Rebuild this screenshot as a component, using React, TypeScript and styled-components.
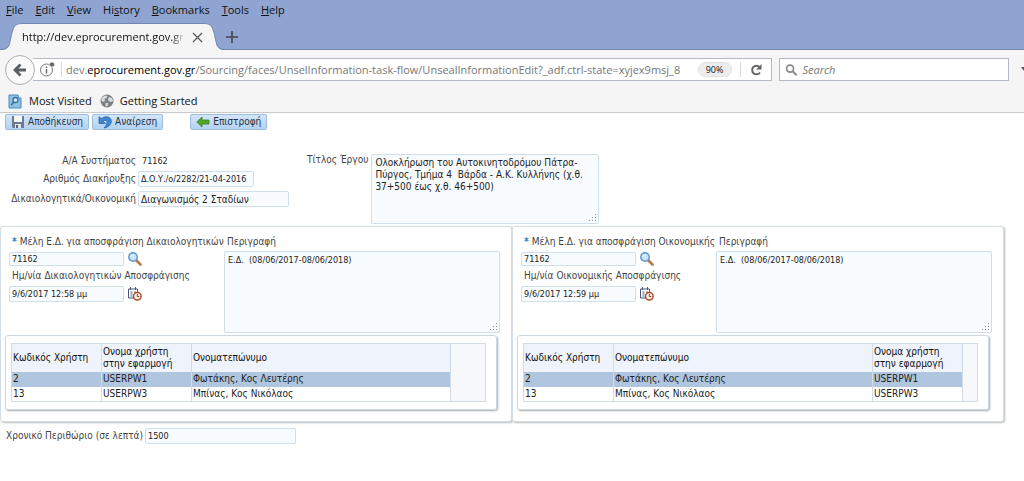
import React from 'react';
import styled, { createGlobalStyle, css } from 'styled-components';

const Global = createGlobalStyle`
  * { box-sizing: border-box; }
  body { margin: 0; background: #fff; overflow-x: hidden; }
  button, input, textarea { font: inherit; color: inherit; margin: 0; }
`;

const Page = styled.div`
  font-family: 'DejaVu Sans Condensed', 'DejaVu Sans', sans-serif;
  font-stretch: condensed;
  font-size: 10px;
  line-height: 12px;
  color: #222;
`;

/* Browser frame */
const Browser = styled.header`
  font-family: 'Open Sans', 'Noto Sans', sans-serif;
  font-stretch: normal;
  font-size: 11px;
  color: #111;
  background: #f5f5f5;
  border-bottom: 1px solid #c9cacb;
`;
const TitleArea = styled.div`
  background: #8fa4d0;
  border-bottom: 1px solid #7087b4;
`;
const MenuBar = styled.nav`
  display: flex;
  gap: 12px;
  height: 24px;
  padding: 2px 6px;
`;
const MenuItem = styled.button`
  border: 0;
  padding: 0;
  background: none;
  height: 16px;
  line-height: 16px;
`;
const TabStrip = styled.div`
  display: flex;
  align-items: flex-end;
  height: 26px;
  margin-bottom: -1px;
`;
const TabEdge = styled.svg`
  display: block;
  width: 22px;
  height: 27px;
  flex: none;
`;
const Tab = styled.div`
  display: flex;
  align-items: center;
  gap: 6px;
  width: 182px;
  height: 27px;
  background: #f5f5f5;
  border-top: 1px solid #7087b4;
`;
const TabTitle = styled.span`
  flex: 1;
  min-width: 0;
  overflow: hidden;
  white-space: nowrap;
  line-height: 16px;
  mask-image: linear-gradient(to right, #000 92%, transparent);
`;
const IconButton = styled.button`
  display: grid;
  place-items: center;
  flex: none;
  padding: 0;
  border: 0;
  background: none;
`;
const NewTab = styled(IconButton)`height: 27px;`;

const NavBar = styled.div`
  display: flex;
  align-items: center;
  height: 39px;
  padding-left: 5px;
`;
const BackButton = styled(IconButton)`
  position: relative;
  width: 30px;
  height: 30px;
  border: 1px solid #a9adb3;
  border-radius: 50%;
  background: #fafafa;
`;
const UrlBar = styled.div`
  display: flex;
  align-items: center;
  flex: 766 1 0;
  min-width: 0;
  height: 23px;
  margin-left: -2px;
  padding-left: 6px;
  border: 1px solid #b3bac4;
  border-left: 0;
  background: #fff;
`;
const Divider = styled.span<{ $gap: number }>`
  flex: none;
  width: 1px;
  height: 15px;
  margin: 0 ${p => p.$gap}px 0 6px;
  background: #d9d9d9;
`;
const Url = styled.span`
  flex: 1;
  min-width: 0;
  overflow: hidden;
  white-space: nowrap;
  line-height: 16px;
  color: #777;
  b { font-weight: 400; color: #000; }
`;
const Zoom = styled.button`
  width: 34px;
  height: 15px;
  margin-right: 2px;
  padding: 0;
  border: 1px solid #e0e0e0;
  border-radius: 8px;
  background: #ededed;
  font-size: 9px;
  line-height: 13px;
`;
const SearchBox = styled.label`
  display: flex;
  align-items: center;
  gap: 5px;
  flex: 234 1 0;
  min-width: 0;
  height: 23px;
  margin: 0 12px 0 7px;
  padding-left: 5px;
  border: 1px solid #b3bac4;
  background: #fff;
  input {
    width: 100%;
    min-width: 0;
    padding: 0;
    border: 0;
    outline: 0;
    background: none;
  }
  input::placeholder { color: #777; opacity: 1; font-style: italic; }
`;
const Bookmarks = styled.nav`
  display: flex;
  gap: 8px;
  height: 23px;
  padding: 4px 8px 0;
  a {
    display: flex;
    align-items: center;
    gap: 6px;
    height: 16px;
    color: inherit;
    text-decoration: none;
  }
`;

/* Form */
const Toolbar = styled.div`
  display: flex;
  gap: 3px;
  padding: 1px 5px 0;
`;
const Action = styled.button<{ $apart?: boolean }>`
  display: flex;
  align-items: center;
  gap: 3px;
  height: 16px;
  margin-left: ${p => (p.$apart ? 24 : 0)}px;
  padding: 0 5px;
  border: 1px solid #9dbde0;
  border-radius: 2px;
  background: linear-gradient(#d3e5f8, #b4d2f3);
  color: #234;
  white-space: nowrap;
`;
const Summary = styled.section`
  display: flex;
  align-items: flex-start;
  padding: 24px 0 2px;
`;
const SummaryFields = styled.div`
  display: grid;
  grid-template-columns: 136px auto;
  grid-template-rows: 13px 16px 16px;
  gap: 4px 2px;
  align-items: center;
  justify-items: start;
  width: 289px;
  label, span { justify-self: end; }
  output { padding-left: 4px; font-size: 9px; }
`;
const Label = styled.label`
  color: #444;
  white-space: nowrap;
`;
const Caption = styled.span`
  color: #444;
  white-space: nowrap;
`;
const field = css`
  border: 1px solid #cfdfeb;
  border-radius: 2px;
  background: #f9fcff;
  outline: 0;
`;
const Input = styled.input<{ $w: number; $h?: number; $numeric?: boolean }>`
  && { ${p => p.$numeric && 'font-size: 9px;'} }
  ${field}
  width: ${p => p.$w}px;
  height: ${p => p.$h ?? 16}px;
  padding: 0 2px;
`;
const AreaFrame = styled.div<{ $w?: number; $h: number }>`
  display: flex;
  position: relative;
  height: ${p => p.$h}px;
  ${p => (p.$w ? `width: ${p.$w}px;` : '')}
`;
const Area = styled.textarea<{ $numeric?: boolean }>`
  && { ${p => p.$numeric && 'font-size: 9px;'} }
  ${field}
  display: block;
  width: 100%;
  height: 100%;
  padding: 2px 3px;
  resize: none;
`;
const Grip = styled.svg`
  position: absolute;
  right: 2px;
  bottom: 2px;
`;
const TitleField = styled.div`
  display: flex;
  gap: 3px;
  margin-left: 18px;
`;

const Panels = styled.div`
  display: grid;
  grid-template-columns: 512fr 492fr;
  padding-right: 20px;
`;
const Panel = styled.section`
  min-width: 0;
  padding: 9px 0 11px 4px;
  border: 1px solid #d3dde7;
  border-radius: 3px;
  background: #fff;
  box-shadow: 1px 1px 2px #bbb;
`;
const PanelFields = styled.div<{ $side: number }>`
  display: grid;
  grid-template-columns: ${p => p.$side}px 1fr;
  padding-right: 11px;
`;
const SideFields = styled.div`
  display: grid;
  grid-template-rows: 12px 14px 12px 16px;
  row-gap: 4px;
  align-items: center;
  align-content: start;
  padding-left: 4px;
`;
const Indent = styled.div`padding-left: 3px; white-space: nowrap;`;
const Star = styled.span`color: #2f78b5; font-weight: 700; margin-right: 3px;`;
const Row = styled.div`
  display: flex;
  align-items: center;
  gap: 3px;
`;
const Description = styled.div`
  display: grid;
  grid-template-rows: 12px 82px;
  row-gap: 3px;
  label { padding-left: 3px; }
`;
const Box = styled.div`
  display: flex;
  margin: 2px 14px 0 0;
  padding: 7px 10px 7px 5px;
  border: 1px solid #ccd8e2;
  border-radius: 3px;
  box-shadow: 1px 1px 2px #aaa;
`;
const Table = styled.table`
  flex: 1;
  min-width: 0;
  table-layout: fixed;
  border-collapse: collapse;
  border: 1px solid #d3dce6;
  th, td {
    padding: 0 1px;
    border-right: 1px solid #d3dce6;
    text-align: left;
    font-weight: 400;
  }
  th { height: 28px; background: #eff3fb; color: #111; }
  td { height: 15px; }
`;
const DataRow = styled.tr<{ $selected: boolean }>`
  background: ${p => (p.$selected ? '#b0c5de' : '#fff')};
`;
const Filler = styled.div<{ $w: number }>`
  flex: none;
  width: ${p => p.$w}px;
  border: 1px solid #d3dce6;
  border-left: 0;
  background: #f6f8fc;
`;
const Margin = styled.div`
  display: flex;
  align-items: center;
  gap: 2px;
  padding: 6px 0 0 6px;
`;

const MENU: [string, string, string][] = [
  ['', 'F', 'ile'], ['', 'E', 'dit'], ['', 'V', 'iew'], ['Hi', 's', 'tory'],
  ['', 'B', 'ookmarks'], ['', 'T', 'ools'], ['', 'H', 'elp'],
];

const SaveIcon = () => (
  <svg width="14" height="14" viewBox="0 0 14 14">
    <path d="M1 1h12v12H2l-1-1z" fill="#6c7d92" />
    <path d="M3 1h8v6H3z" fill="#f4f7fa" />
    <path d="M4 9h6v4H4z" fill="#dfe5ec" />
    <path d="M5 10h2v3H5z" fill="#55657a" />
  </svg>
);
const UndoIcon = () => (
  <svg width="14" height="14" viewBox="0 0 14 14">
    <path d="M1 1.500v7h6.500L5.300 6.300C7 4.800 9 5.300 9 7.300c0 2-1 3.600-3 5.700 5-.8 7.300-3.500 7.300-6.700C13.300 1.300 7 .2 3.300 3.700z" fill="#3f86d4" stroke="#1e5ca5" strokeWidth=".7" />
  </svg>
);
const ReturnIcon = () => (
  <svg width="14" height="12" viewBox="0 0 14 12">
    <path d="M.8 6 6 1v3h7v4H6v3z" fill="#55a62c" stroke="#36801a" strokeWidth=".8" />
  </svg>
);
const LensIcon = () => (
  <svg width="16" height="14" viewBox="0 0 16 14">
    <path d="m9 8 4.500 4.500" stroke="#b97845" strokeWidth="2.600" strokeLinecap="round" />
    <circle cx="6" cy="5" r="4.200" fill="#c9e5fa" stroke="#5c91cb" strokeWidth="1.400" />
    <path d="M3.800 4.500C4.200 3 5.200 2.600 6.500 2.700" fill="none" stroke="#fff" />
  </svg>
);
const DateIcon = () => (
  <svg width="15" height="14" viewBox="0 0 15 14">
    <path d="M1.500 2h9v9h-9z" fill="#fff" stroke="#49557f" />
    <path d="M3.500 0v3M8.500 0v3M3.500 5h2M7 5h2M3.500 7h2M3.500 9h2" stroke="#49557f" />
    <circle cx="10.300" cy="9.300" r="3.800" fill="#fff2e8" stroke="#b2512f" strokeWidth="1.500" />
    <path d="M10.300 7v2.500h2" fill="none" stroke="#8c3d22" />
  </svg>
);
const MostVisitedIcon = () => (
  <svg width="15" height="15" viewBox="0 0 15 15">
    <path d="M1 1h9l1 3h2v10H1z" fill="#8ec0e4" stroke="#4a8cba" />
    <circle cx="7.500" cy="6" r="2.500" fill="#d8edf9" stroke="#326d9c" strokeWidth="1.300" />
    <path d="m5.700 8-2.500 3" stroke="#326d9c" strokeWidth="1.600" />
  </svg>
);
const GlobeIcon = () => (
  <svg width="14" height="14" viewBox="0 0 14 14">
    <circle cx="7" cy="7" r="6.500" fill="#7c7f82" />
    <path d="M2 3.500 5 1.500l2.500.6-1 2L4.500 5 5 7 3 8 1 6zM9 3l3 1 1 3-2 1-2.500-1L8 5zM5.500 8.500l3 1L7.500 12l-2 .5z" fill="#d9dadb" />
  </svg>
);

const GripDots = () => (
  <Grip width="9" height="9" viewBox="0 0 9 9" fill="#8b9097">
    <path d="M7 1h1v1H7zM7 4h1v1H7zM4 4h1v1H4zM7 7h1v1H7zM4 7h1v1H4zM1 7h1v1H1z" />
  </Grip>
);

type Column = { key: 'id' | 'user' | 'name'; title: React.ReactNode; width?: number };
const ID: Column = { key: 'id', title: 'Κωδικός Χρήστη', width: 90 };
const USER: Column = { key: 'user', title: <>Ονομα χρήστη<br />στην εφαρμογή</>, width: 90 };
const NAME: Column = { key: 'name', title: 'Ονοματεπώνυμο' };
const MEMBERS = [
  { id: '2', user: 'USERPW1', name: 'Φωτάκης, Κος Λευτέρης' },
  { id: '13', user: 'USERPW3', name: 'Μπίνας, Κος Νικόλαος' },
];

type CommitteeProps = {
  id: string; side: number; members: string; dateLabel: string; date: string; columns: Column[]; filler: number;
};
const Committee = ({ id, side, members, dateLabel, date, columns, filler }: CommitteeProps) => (
  <Panel>
    <PanelFields $side={side}>
      <SideFields>
        <Indent><Star>*</Star><Label htmlFor={`${id}-code`}>{members}</Label></Indent>
        <Row>
          <Input id={`${id}-code`} $numeric $w={115} $h={14} defaultValue="71162" />
          <IconButton aria-label="Αναζήτηση"><LensIcon /></IconButton>
        </Row>
        <Indent><Label htmlFor={`${id}-date`}>{dateLabel}</Label></Indent>
        <Row>
          <Input id={`${id}-date`} $numeric $w={115} defaultValue={date} />
          <IconButton aria-label="Επιλογή ημερομηνίας"><DateIcon /></IconButton>
        </Row>
      </SideFields>
      <Description>
        <Label htmlFor={`${id}-text`}>Περιγραφή</Label>
        <AreaFrame $h={82}>
          <Area id={`${id}-text`} $numeric defaultValue="Ε.Δ.  (08/06/2017-08/06/2018)" />
          <GripDots />
        </AreaFrame>
      </Description>
    </PanelFields>
    <Box>
      <Table>
        <colgroup>{columns.map(c => <col key={c.key} width={c.width} />)}</colgroup>
        <thead><tr>{columns.map(c => <th key={c.key}>{c.title}</th>)}</tr></thead>
        <tbody>
          {MEMBERS.map((m, i) => (
            <DataRow key={m.id} $selected={i === 0}>
              {columns.map(c => <td key={c.key}>{m[c.key]}</td>)}
            </DataRow>
          ))}
        </tbody>
      </Table>
      <Filler $w={filler} />
    </Box>
  </Panel>
);

export default function App() {
  return (
    <Page>
      <Global />
      <Browser>
        <TitleArea>
          <MenuBar>
            {MENU.map(([a, k, b]) => <MenuItem key={k + b}>{a}<u>{k}</u>{b}</MenuItem>)}
          </MenuBar>
          <TabStrip>
            <TabEdge viewBox="0 0 22 27">
              <path d="M0 27C10 27 9 22 11 14 13 5 14 .5 22 .5V27z" fill="#f5f5f5" />
              <path d="M0 26.500C10 26.500 9 22 11 14 13 5 14 .5 22 .5" fill="none" stroke="#7087b4" />
            </TabEdge>
            <Tab>
              <TabTitle>http://dev.eprocurement.gov.gr</TabTitle>
              <IconButton aria-label="Close tab">
                <svg width="13" height="11" viewBox="0 0 13 11"><path d="m2 1 9 9M11 1l-9 9" stroke="#555" strokeWidth="1.200" /></svg>
              </IconButton>
            </Tab>
            <TabEdge viewBox="0 0 22 27">
              <path d="M22 27C12 27 13 22 11 14 9 5 8 .5 0 .5V27z" fill="#f5f5f5" />
              <path d="M22 26.500C12 26.500 13 22 11 14 9 5 8 .5 0 .5" fill="none" stroke="#7087b4" />
            </TabEdge>
            <NewTab aria-label="New tab">
              <svg width="12" height="12" viewBox="0 0 12 12"><path d="M6 0v12M0 6h12" stroke="#444" strokeWidth="1.600" /></svg>
            </NewTab>
          </TabStrip>
        </TitleArea>
        <NavBar>
          <BackButton aria-label="Back">
            <svg width="14" height="14" viewBox="0 0 14 14"><path d="M7.500 1.500 2 7l5.500 5.500M2.500 7H13" fill="none" stroke="#5b5e62" strokeWidth="2.800" /></svg>
          </BackButton>
          <UrlBar>
            <IconButton aria-label="Site information">
              <svg width="16" height="15" viewBox="0 0 16 15">
                <circle cx="7.500" cy="8" r="6" fill="none" stroke="#777" />
                <path d="M7.500 7v4.500M7.500 4.500V6" stroke="#666" strokeWidth="1.400" />
                <circle cx="13" cy="2.500" r="2.500" fill="#666" stroke="#fff" strokeWidth=".6" />
              </svg>
            </IconButton>
            <Divider $gap={4} />
            <Url>dev.<b>eprocurement.gov.gr</b>/Sourcing/faces/UnselInformation-task-flow/UnsealInformationEdit?_adf.ctrl-state=xyjex9msj_8</Url>
            <Zoom>90%</Zoom>
            <Divider $gap={8} />
            <IconButton aria-label="Reload">
              <svg width="22" height="14" viewBox="0 0 22 14">
                <path d="M10.500 4A4.300 4.300 0 1 0 11 9.500" fill="none" stroke="#666" strokeWidth="2" />
                <path d="M12.500 1v5.500H7z" fill="#666" />
              </svg>
            </IconButton>
          </UrlBar>
          <SearchBox>
            <svg width="14" height="14" viewBox="0 0 14 14">
              <circle cx="5.500" cy="5.500" r="3.800" fill="none" stroke="#888" strokeWidth="1.800" />
              <path d="m8.300 8.300 4.500 4.500" stroke="#888" strokeWidth="2.200" />
            </svg>
            <input aria-label="Search" placeholder="Search" />
          </SearchBox>
          <svg width="3" height="8" viewBox="0 0 3 8"><path d="M0 1h3v4z" fill="#555" /></svg>
        </NavBar>
        <Bookmarks>
          <a href="#most-visited"><MostVisitedIcon />Most Visited</a>
          <a href="#getting-started"><GlobeIcon />Getting Started</a>
        </Bookmarks>
      </Browser>
      <main>
        <Toolbar>
          <Action><SaveIcon />Αποθήκευση</Action>
          <Action><UndoIcon />Αναίρεση</Action>
          <Action $apart><ReturnIcon />Επιστροφή</Action>
        </Toolbar>
        <Summary>
          <SummaryFields>
            <Caption>Α/Α Συστήματος</Caption>
            <output>71162</output>
            <Label htmlFor="notice">Αριθμός Διακήρυξης</Label>
            <Input id="notice" $numeric $w={116} defaultValue="Δ.Ο.Υ./ο/2282/21-04-2016" />
            <Label htmlFor="kind">Δικαιολογητικά/Οικονομική</Label>
            <Input id="kind" $w={151} defaultValue="Διαγωνισμός 2 Σταδίων" />
          </SummaryFields>
          <TitleField>
            <Label htmlFor="title">Τίτλος Έργου</Label>
            <AreaFrame $w={228} $h={70}>
              <Area id="title" defaultValue={'Ολοκλήρωση του Αυτοκινητοδρόμου Πάτρα-Πύργος, Τμήμα 4  Βάρδα - Α.Κ. Κυλλήνης (χ.θ. 37+500 έως χ.θ. 46+500)'} />
              <GripDots />
            </AreaFrame>
          </TitleField>
        </Summary>
        <Panels>
          <Committee
            id="documents" side={219} filler={35} columns={[ID, USER, NAME]}
            members="Μέλη Ε.Δ. για αποσφράγιση Δικαιολογητικών"
            dateLabel="Ημ/νία Δικαιολογητικών Αποσφράγισης" date="9/6/2017 12:58 μμ"
          />
          <Committee
            id="financial" side={199} filler={15} columns={[ID, NAME, USER]}
            members="Μέλη Ε.Δ. για αποσφράγιση Οικονομικής"
            dateLabel="Ημ/νία Οικονομικής Αποσφράγισης" date="9/6/2017 12:59 μμ"
          />
        </Panels>
        <Margin>
          <Label htmlFor="margin">Χρονικό Περιθώριο (σε λεπτά)</Label>
          <Input id="margin" $numeric $w={151} defaultValue="1500" />
        </Margin>
      </main>
    </Page>
  );
}
